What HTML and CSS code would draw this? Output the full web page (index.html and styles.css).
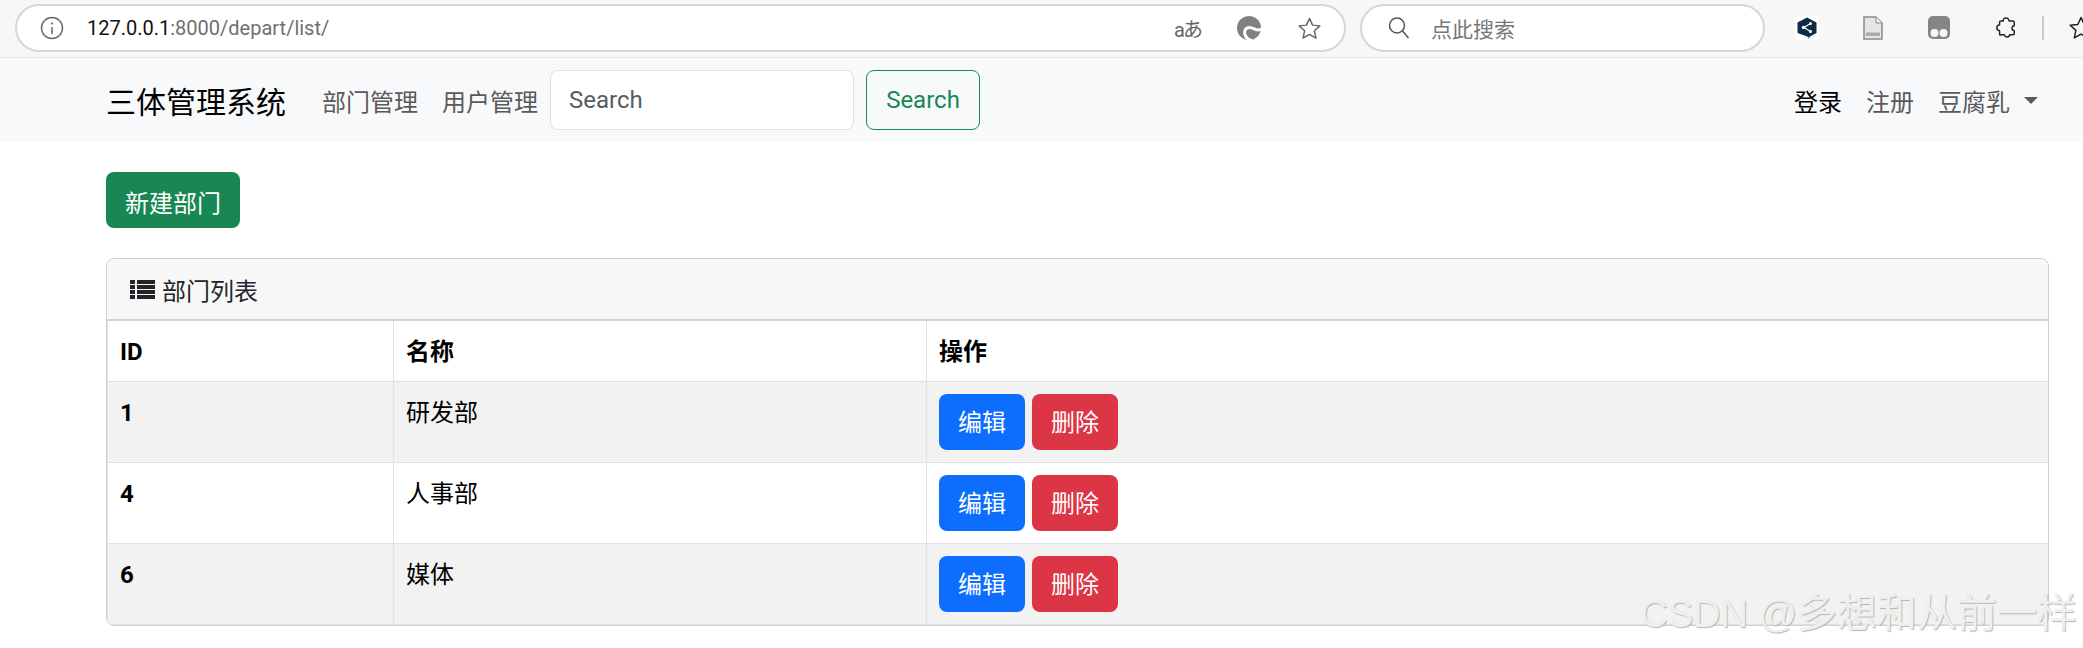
FILE: index.html
```html
<!DOCTYPE html>
<html lang="zh-CN">
<head>
<meta charset="utf-8">
<title>部门列表</title>
<link rel="stylesheet" href="styles.css">
</head>
<body>
<div class="chrome">
  <div class="addr">
    <svg class="ic-info" viewBox="0 0 24 24" width="24" height="24"><circle cx="12" cy="12" r="10.5" fill="none" stroke="#666" stroke-width="1.4"/><circle cx="12" cy="7.5" r="1.1" fill="#666"/><path d="M12 11v7" stroke="#666" stroke-width="1.5"/></svg>
    <span class="url"><span class="host">127.0.0.1</span>:8000/depart/list/</span>
    <span class="spacer"></span>
    <span class="aa">aあ</span>
    <svg class="ic-edge" viewBox="0 0 24 24" width="24" height="24"><circle cx="12" cy="12" r="12" fill="#808080"/><path d="M25 12.500C21 17 17 11.500 12.500 11.500 8 11.500 6.500 16 8.500 20c1.200 2.500 3.500 4 6.500 4.500" fill="none" stroke="#fff" stroke-width="3"/></svg>
    <svg class="ic-star" viewBox="0 0 26 26" width="25" height="25"><path d="M13 2.500l3.200 7 7.600.8-5.700 5.100 1.600 7.500L13 19.100 6.300 22.900l1.600-7.500L2.200 10.300l7.600-.8z" fill="none" stroke="#666" stroke-width="1.500" stroke-linejoin="round"/></svg>
  </div>
  <div class="search-box">
    <svg viewBox="0 0 24 24" width="24" height="24"><circle cx="10" cy="9.500" r="7.500" fill="none" stroke="#555" stroke-width="1.500"/><path d="M15.500 15l6 7" stroke="#555" stroke-width="1.500"/></svg>
    <span class="search-hint">点此搜索</span>
  </div>
  <div class="ext-row">
    <svg class="ext-a" viewBox="0 0 24 24" width="24" height="24"><rect width="24" height="24" rx="3" fill="#fff"/><path d="M12 1.500l9.500 5v10.500l-6.500 3.500-1.500 2.500v-2L2.500 17V6.500z" fill="#0f2b46"/><path d="M9 11.500L15.500 7.500M9 11.500l6.500 4" stroke="#fff" stroke-width="1.100"/><circle cx="8.500" cy="11.500" r="1.700" fill="#fff"/><circle cx="15.500" cy="7.500" r="1.500" fill="#fff"/><circle cx="15.500" cy="15.500" r="1.500" fill="#fff"/></svg>
    <svg class="ext-b" viewBox="0 0 20 24" width="20" height="24"><path d="M1 1h12l6 6v16H1z" fill="#e6e6e6" stroke="#8a8a8a" stroke-width="1.500"/><path d="M13 1v6h6" fill="#f5f5f5" stroke="#8a8a8a"/><rect x="3" y="16.500" width="14" height="3.500" fill="#aaa"/></svg>
    <svg class="ext-c" viewBox="0 0 22 23" width="22" height="23"><rect x="0" y="0" width="22" height="23" rx="5" fill="#858585"/><circle cx="6.500" cy="17" r="4" fill="#f6f6f6"/><circle cx="15.500" cy="17" r="4" fill="#f6f6f6"/></svg>
    <svg class="ext-d" viewBox="0 0 24 24" width="22" height="23"><path d="M9 3.500c1-2.500 5-2.500 6 0l.5 1.500h4c1 0 1.500.5 1.500 1.500v3.500c-3 0-3.500 5 0 5.500v3c0 1-.5 1.500-1.500 1.500h-3.500c-.5 3-5 3-6 0H6.500C5.500 20.500 5 20 5 19v-3.500c-4-.5-4-6 0-6.500V6.500C5 5.500 5.500 5 6.500 5H9z" fill="none" stroke="#222" stroke-width="1.600" stroke-linejoin="round"/></svg>
    <span class="sep"></span>
    <svg class="ext-e" viewBox="0 0 26 26" width="26" height="26"><path d="M13 2.500l3.200 7 7.600.8-5.700 5.100 1.600 7.500L13 19.100 6.300 22.900l1.600-7.500L2.200 10.300l7.600-.8z" fill="none" stroke="#222" stroke-width="1.500" stroke-linejoin="round"/></svg>
  </div>
</div>

<nav class="navbar">
  <a class="brand">三体管理系统</a>
  <a class="nav-link">部门管理</a>
  <a class="nav-link">用户管理</a>
  <input class="nav-input" type="text" placeholder="Search">
  <button class="btn-search">Search</button>
  <span class="spacer"></span>
  <a class="nav-link dark">登录</a>
  <a class="nav-link">注册</a>
  <a class="nav-link user">豆腐乳<span class="caret"></span></a>
</nav>

<main class="content">
  <a class="btn btn-green">新建部门</a>
  <section class="card">
    <header class="card-head">
      <svg viewBox="0 0 25 19" width="25" height="19"><path d="M0 0h5v4H0zM7 0h18v4H7zM0 5h5v4H0zM7 5h18v4H7zM0 10h5v4H0zM7 10h18v4H7zM0 15h5v4H0zM7 15h18v4H7z" fill="#212529"/></svg>
      <span>部门列表</span>
    </header>
    <table class="tbl">
      <colgroup><col class="c1"><col class="c2"><col></colgroup>
      <thead><tr><th>ID</th><th>名称</th><th>操作</th></tr></thead>
      <tbody>
        <tr class="odd"><th>1</th><td>研发部</td><td><div class="acts"><a class="btn btn-blue">编辑</a><a class="btn btn-red">删除</a></div></td></tr>
        <tr><th>4</th><td>人事部</td><td><div class="acts"><a class="btn btn-blue">编辑</a><a class="btn btn-red">删除</a></div></td></tr>
        <tr class="odd"><th>6</th><td>媒体</td><td><div class="acts"><a class="btn btn-blue">编辑</a><a class="btn btn-red">删除</a></div></td></tr>
      </tbody>
    </table>
  </section>
</main>
<div class="watermark"><span class="wm-latin">CSDN @</span>多想和从前一样</div>
</body>
</html>
```
FILE: styles.css
```css
* { box-sizing: border-box; }
html, body { margin: 0; height: 648px; overflow: hidden; }
body {
  position: relative;
  background: #fff;
  color: #000;
  font-family: Roboto, "Noto Sans CJK SC", sans-serif;
  font-size: 24px;
}
.spacer { flex: 1; }

.chrome {
  height: 58px;
  background: #f7f7f7;
  border-bottom: 1px solid #e8e8e8;
  display: flex;
  align-items: flex-start;
  padding: 4px 0 0 15px;
}
.addr {
  flex: none;
  width: 1331px;
  height: 48px;
  background: #fff;
  border: 2px solid #d6d6d6;
  border-radius: 24px;
  display: flex;
  align-items: center;
  padding: 0 22px 0 23px;
}
.url {
  margin-left: 23px;
  font-size: 20px;
  color: #6f6f6f;
}
.host { color: #111; }
.aa {
  font-size: 20px;
  color: #666;
  margin-right: 36px;
  letter-spacing: -2px;
}
.ic-edge { margin-right: 36px; }
.search-box {
  flex: none;
  width: 405px;
  height: 48px;
  margin-left: 14px;
  background: #fff;
  border: 2px solid #d6d6d6;
  border-radius: 24px;
  display: flex;
  align-items: center;
  padding-left: 25px;
}
.search-hint { margin-left: 20px; font-size: 21px; color: #777; }
.ext-row {
  flex: none;
  height: 47px;
  width: 318px;
  display: flex;
  align-items: center;
}
.ext-row svg { flex: none; }
.ext-a { margin-left: 30px; }
.ext-b { margin-left: 44px; }
.ext-c { margin-left: 45px; }
.ext-d { margin-left: 45px; }
.sep { flex: none; width: 2px; height: 24px; background: #ccc; margin-left: 25px; }
.ext-e { margin-left: 24px; }

.navbar {
  height: 84px;
  background: #f8f9fa;
  display: flex;
  align-items: center;
  padding: 0 45px 0 106px;
}
.brand { font-size: 30px; color: #000; margin-right: 36px; white-space: nowrap; }
.nav-link { color: #595a5c; margin-right: 24px; white-space: nowrap; }
.nav-link.dark { color: #000; }
.navbar .user { margin-right: 0; display: flex; align-items: center; }
.caret {
  margin-left: 14px;
  border-top: 7px solid #595a5c;
  border-left: 7px solid transparent;
  border-right: 7px solid transparent;
}
.nav-input {
  width: 304px;
  height: 60px;
  margin-left: -12px;
  padding: 0 18px;
  background: #fff;
  border: 1px solid #dee2e6;
  border-radius: 8px;
  font: inherit;
}
.nav-input::placeholder { color: #595c5f; opacity: 1; }
.btn-search {
  width: 114px;
  height: 60px;
  margin-left: 12px;
  padding: 0;
  background: transparent;
  border: 1px solid #198754;
  border-radius: 8px;
  color: #198754;
  font: inherit;
}

.content { padding: 30px 34px 0 106px; }
.btn {
  display: inline-flex;
  align-items: center;
  justify-content: center;
  height: 56px;
  padding-top: 2px;
  border-radius: 8px;
  color: #fff;
  font-size: 24px;
}
.btn-green { width: 134px; background: #198754; }
.btn-blue { width: 86px; background: #0d6efd; }
.btn-red { width: 86px; background: #dc3545; }

.card {
  margin-top: 30px;
  border: 1px solid #cfd0d2;
  border-radius: 8px;
  overflow: hidden;
}
.card-head {
  height: 62px;
  background: #f7f7f7;
  border-bottom: 2px solid #d2d3d5;
  display: flex;
  align-items: center;
  gap: 7px;
  padding-left: 23px;
  color: #212529;
}
.tbl {
  width: 100%;
  border-collapse: collapse;
  table-layout: fixed;
}
.c1 { width: 286px; }
.c2 { width: 533px; }
.tbl th, .tbl td {
  border: 1px solid #dee2e6;
  padding: 12px;
  text-align: left;
  vertical-align: top;
  line-height: 36px;
}
.tbl th, .tbl td:nth-child(2) { padding-top: 13px; padding-bottom: 11px; }
.tbl tr > :last-child { border-right: 0; }
.tbl thead th { border-top: 0; }
.tbl tr { height: 81px; }
.tbl thead tr { height: 60px; }
.odd { background: #f2f2f2; }
.acts { display: flex; gap: 7px; }

.watermark {
  position: absolute;
  right: 6px;
  top: 590px;
  font-family: "Liberation Sans", "Noto Sans CJK SC", sans-serif;
  font-size: 40px;
  line-height: 46px;
  white-space: nowrap;
  color: #efefef;
  text-shadow: 1px 1px 1px #b5b5b5;
}
.wm-latin { font-size: 38px; }
```
